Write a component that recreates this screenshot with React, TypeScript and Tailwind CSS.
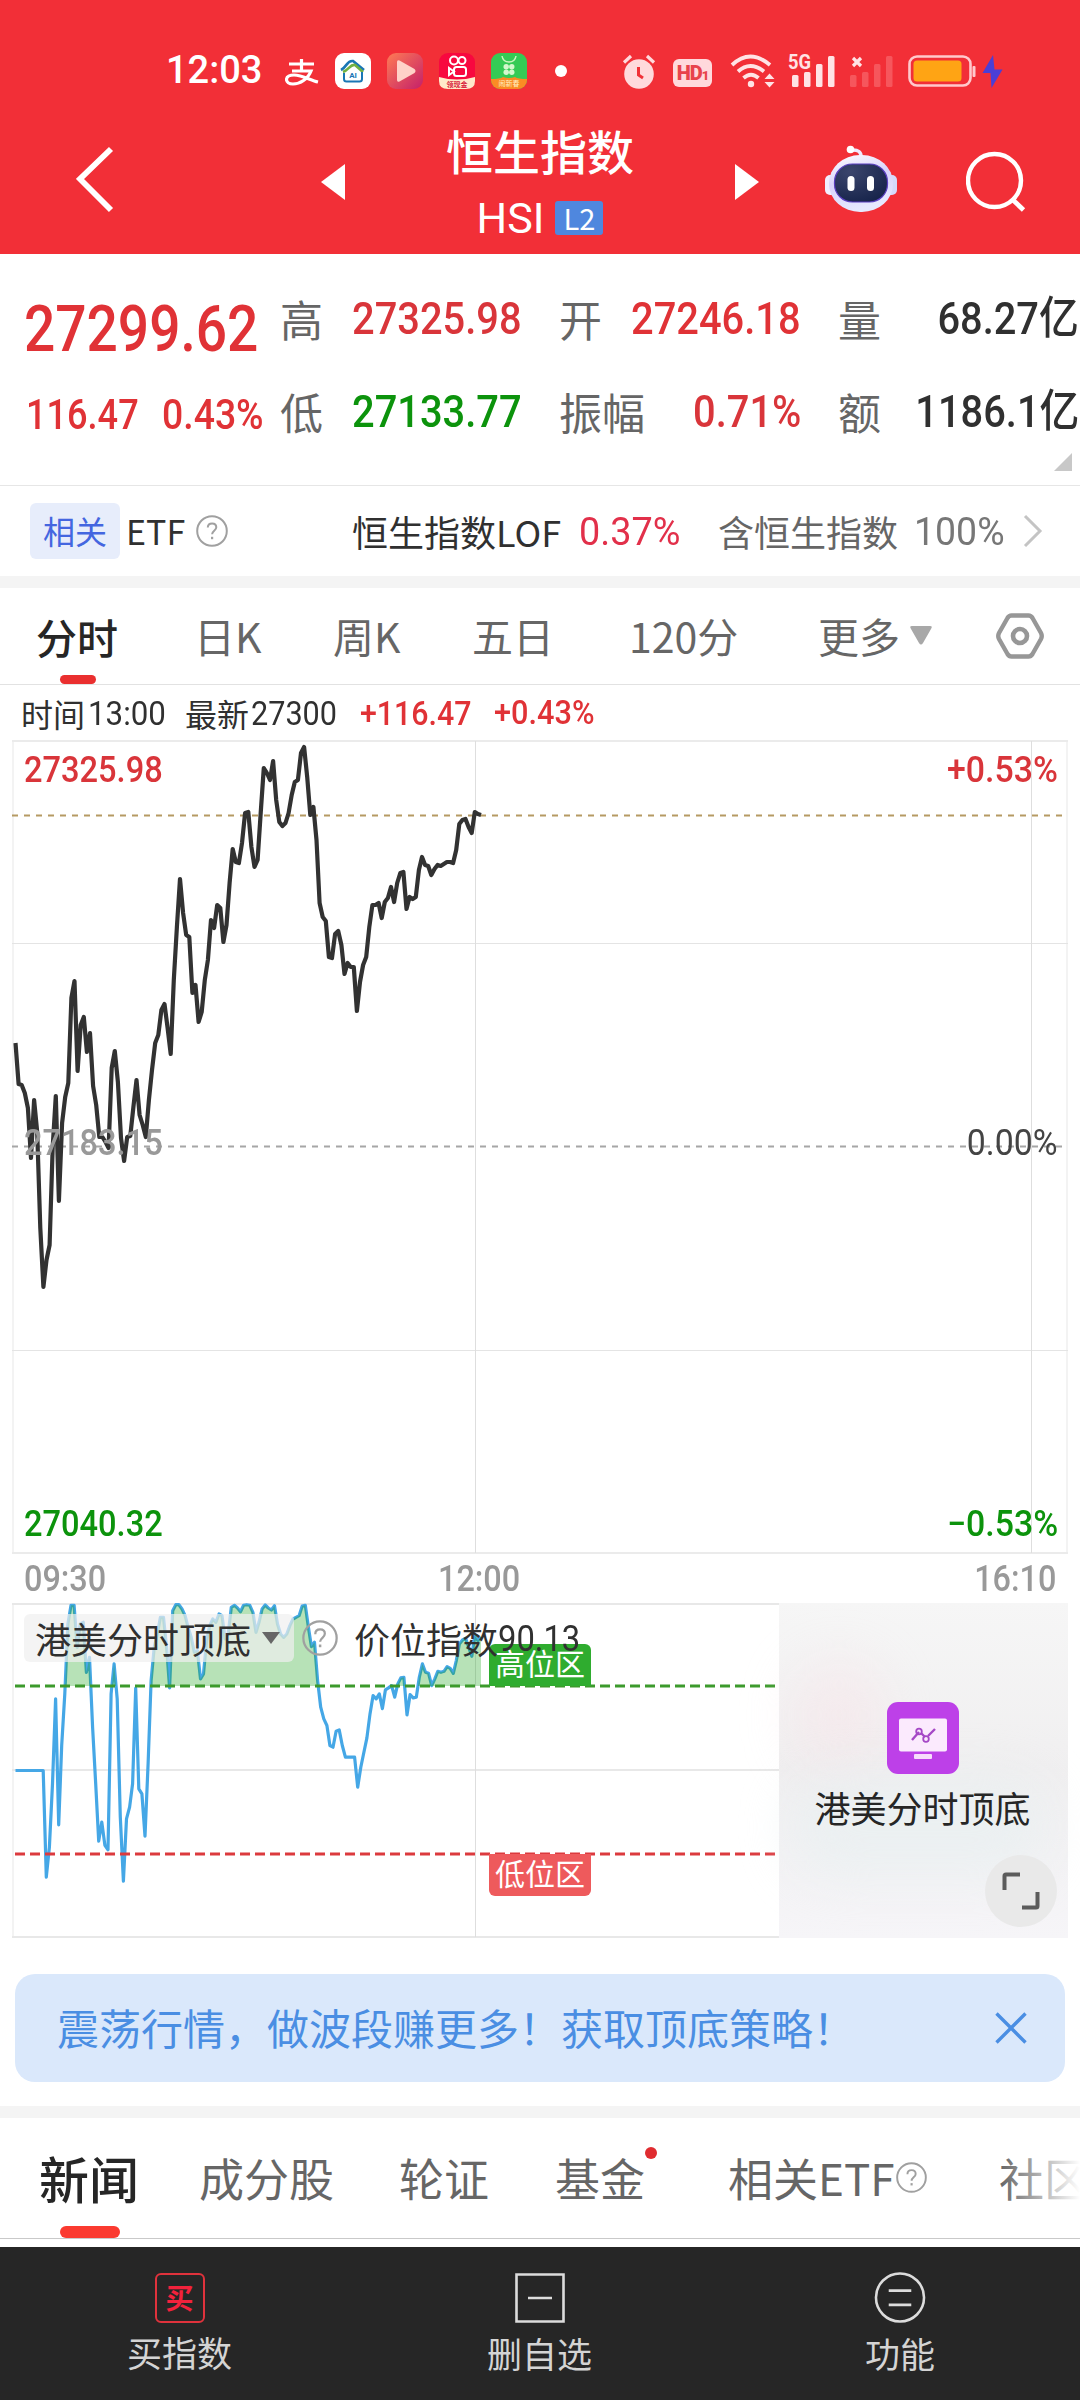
import type { ReactNode } from "react";
import clsx from "clsx";

//=============== DATA ===============//
// Distance in px from the top of the price chart, one value per minute.
const prices = [
  303, 344, 345, 353, 368, 418, 360, 392, 488, 547, 520, 505, 407, 356, 461, 383, 357, 343, 258, 241,
  331, 285, 277, 312, 293, 346, 365, 397, 397, 402, 408, 328, 311, 342, 398, 421, 397, 396, 367, 340,
  375, 385, 397, 360, 330, 303, 295, 270, 264, 288, 314, 240, 187, 139, 173, 195, 197, 253, 245, 282,
  272, 240, 220, 180, 188, 165, 168, 202, 185, 143, 109, 122, 123, 103, 73, 72, 107, 127, 120, 73, 28,
  33, 40, 21, 60, 82, 86, 83, 73, 55, 42, 40, 13, 7, 37, 75, 67, 100, 163, 177, 181, 217, 218, 194,
  191, 205, 234, 223, 227, 227, 271, 242, 225, 217, 187, 165, 165, 163, 178, 162, 158, 147, 162, 143,
  133, 132, 169, 157, 159, 157, 130, 117, 125, 126, 135, 129, 125, 126, 124, 122, 122, 123, 110, 84,
  80, 79, 87, 93, 72, 74, 75,
];

// Position index, 0 - 100, one value per minute.
const positions = [
  50, 50, 50, 50, 50, 50, 50, 50, 50, 50, 18, 27, 46, 71.5, 33.7, 57.5, 73, 94, 99.6, 99.6, 87, 94,
  94.5, 79.5, 84, 63, 46, 28.8, 34.5, 27.5, 26.2, 73, 82, 71.5, 36, 16.8, 35.5, 39, 46, 74.7, 44.5,
  43, 30.3, 52, 77, 87, 91, 96, 96, 87, 74.8, 98, 99.8, 99.8, 98.5, 96.5, 93, 90, 85.5, 86, 77.5, 79,
  89, 93.5, 95.5, 94.5, 97, 96.5, 89.5, 91, 99, 99.6, 98.8, 97.7, 99.6, 99.8, 99.6, 97.5, 91.5, 94.5,
  98.5, 99.7, 98.8, 98.2, 99.5, 94, 91, 90, 91, 93.5, 95.5, 96, 96.5, 99.4, 99.6, 93, 87.2, 88.5, 77,
  69, 65.5, 63.5, 57.5, 57, 61.8, 62.2, 57.5, 54, 54, 54, 54, 45, 51, 55.5, 59.8, 67, 72.5, 71.5, 73,
  68.6, 74.2, 74.8, 75.5, 72, 76, 77.8, 78, 66.7, 72.8, 71.8, 72, 78, 82, 79.5, 79.2, 75.5, 77.5,
  79.8, 79.5, 79.8, 81.2, 80.7, 79.2, 83, 88, 89.2, 89.7, 87, 84.3, 90.5, 89, 90.1,
];

const START_X = 3.5;
const END_X = 469;

const toPoints = (values: number[], toY: (v: number) => number): string => {
  const step = (END_X - START_X) / (values.length - 1);
  return values.map((v, i) => `${(START_X + i * step).toFixed(1)},${toY(v).toFixed(1)}`).join(" ");
};

const pricePoints = toPoints(prices, (v) => v);
const positionPoints = toPoints(positions, (v) => 1 + ((100 - v) / 100) * 333);

//=============== SMALL PARTS ===============//
type PartProps = { className?: string; children?: ReactNode };

// Narrow digits used for every quote value
function Num({ className, children }: PartProps) {
  return (
    <span
      className={clsx(
        "inline-block whitespace-nowrap font-['Roboto','Noto_Sans_CJK_SC',sans-serif] leading-none",
        className,
      )}
    >
      {children}
    </span>
  );
}

function Help({ className }: PartProps) {
  return (
    <svg viewBox="0 0 32 32" className={clsx("shrink-0 fill-none stroke-[#a0a0a0]", className)}>
      <circle cx="16" cy="16" r="14.8" strokeWidth="2" />
      <path d="M11.8 12.6c0-2.6 1.8-4.2 4.3-4.2s4.2 1.6 4.2 3.9c0 3.4-4.2 3.6-4.2 7" strokeWidth="2" />
      <path d="M16.1 21.8v2.4" strokeWidth="2.2" />
    </svg>
  );
}

//=============== STATUS BAR ===============//
function StatusBar() {
  return (
    <div className="flex h-[142px] items-end pb-[53px] pl-[166px] text-white">
      <Num className="w-[119px] text-[38px] font-medium leading-[34px]">12:03</Num>

      {/* Notifications */}
      <svg viewBox="0 0 34 36" className="h-9 w-[34px] fill-none stroke-white">
        <path d="M4 11h25M16.5 6v12M7 18h19c-3 8-11 13-18 13-4 0-6.500-2-6.500-4.500C1.500 23.500 5 22 9 22c8 0 16 5 24 7" strokeWidth="3.200" />
      </svg>
      <svg viewBox="0 0 36 36" className="ml-4 size-9">
        <rect width="36" height="36" rx="9" fill="#fff" />
        <path d="M6 17C12 14 12 7 18 8l11 9" fill="none" stroke="#1976b5" strokeWidth="2.600" />
        <path d="M8 19c6-2 7-8 12-7l8 7" fill="none" stroke="#72b043" strokeWidth="2.600" />
        <path d="M9 20v6q0 2.500 2.500 2.500h13q2.500 0 2.500-2.500v-7" fill="none" stroke="#1976b5" strokeWidth="2" />
        <text x="18" y="25" textAnchor="middle" fontSize="8" className="fill-[#1976b5] font-['Roboto',sans-serif] font-bold">AI</text>
      </svg>
      <svg viewBox="0 0 36 36" className="ml-4 size-9">
        <defs>
          <linearGradient id="play" x1="0" y1="0" x2="1" y2="1">
            <stop offset="0" stopColor="#ff7b54" />
            <stop offset="1" stopColor="#c4206a" />
          </linearGradient>
        </defs>
        <rect width="36" height="36" rx="9" fill="url(#play)" />
        <path d="M10 9v18q0 2.500 2.500 1.500l15-8.500q2-2 0-4l-15-8.500Q10 6.500 10 9z" fill="#ffd2c8" />
      </svg>
      <svg viewBox="0 0 36 36" className="ml-4 size-9">
        <rect width="36" height="36" rx="9" fill="#f8083f" />
        <g fill="none" stroke="#fff" strokeWidth="2">
          <circle cx="15" cy="7.500" r="4" />
          <circle cx="23" cy="7.500" r="3.500" />
          <rect x="15" y="14" width="12" height="9" rx="2.500" />
          <path d="M15 18.500 10 15v7z" />
        </g>
        <path d="M0 24q18 5 36 0v4q0 8-9 8H9q-9 0-9-8z" fill="#ffe9c9" />
        <text x="18" y="33.500" textAnchor="middle" fontSize="7" className="fill-[#d81e3c] font-['Noto_Sans_CJK_SC',sans-serif] font-bold">领现金</text>
      </svg>
      <svg viewBox="0 0 36 36" className="ml-4 size-9">
        <defs>
          <clipPath id="app">
            <rect width="36" height="36" rx="9" />
          </clipPath>
        </defs>
        <g clipPath="url(#app)">
          <rect width="36" height="36" fill="#35cb55" />
          <path d="M11 3q1 6 7 6t7-6" fill="none" stroke="#c9f5bd" strokeWidth="1.500" />
          <g fill="#d4f8cd">
            <circle cx="15.200" cy="13.800" r="2.700" />
            <circle cx="20.800" cy="13.800" r="2.700" />
            <circle cx="15.200" cy="19.300" r="2.700" />
            <circle cx="20.800" cy="19.300" r="2.700" />
          </g>
          <path d="M0 26q9 0 12-2 6 2 12 0 3 2 12 2v10H0z" fill="#fb8b24" />
          <text x="18" y="33" textAnchor="middle" fontSize="7" className="fill-[#fff2c4] font-['Noto_Sans_CJK_SC',sans-serif]">闹新春</text>
        </g>
      </svg>
      <span className="mb-3 ml-[28px] size-3 rounded-full bg-white" />

      {/* System */}
      <svg viewBox="0 0 34 36" className="ml-[55px] h-9 w-[34px]">
        <path d="M2 9.500 9 3M32 9.500 25 3" stroke="#ffd9dc" strokeWidth="3.200" />
        <circle cx="17" cy="21" r="14.800" fill="#ffd9dc" />
        <path d="M16.500 14v8l4.500 3" fill="none" stroke="#f13037" strokeWidth="3" />
      </svg>
      <span className="mb-[2px] ml-[17px] flex h-7 w-[39px] items-center justify-center rounded-md bg-[#ffd9dc] font-['Roboto',sans-serif] text-[20px] font-black tracking-[-1px] text-[#e8434b]">
        HD<span className="pt-1.5 text-[13px]">1</span>
      </span>
      <svg viewBox="0 0 46 36" className="ml-[18px] h-9 w-[46px] fill-none stroke-[#ffe3e5]">
        <path d="M2 12q18-17 38 0M8 18.500q12-11 26 0M13.500 25q7.500-6.500 15 0" strokeWidth="3.800" />
        <circle cx="21" cy="31" r="3.200" className="fill-[#ffe3e5] stroke-none" />
        <path d="m34.500 26 5-5.500 5 5.500zM34.500 29l5 5.500 5-5.500z" className="fill-[#ffe3e5] stroke-none" />
      </svg>
      <svg viewBox="0 0 48 36" className="ml-3 h-9 w-12 overflow-visible fill-[#ffe3e5]">
        <text x="0" y="16" fontSize="20" textLength="23" lengthAdjust="spacingAndGlyphs" className="font-['Roboto',sans-serif] font-bold">5G</text>
        <rect x="4" y="22" width="6.500" height="12" rx="1.500" />
        <rect x="16" y="19" width="6.500" height="15" rx="1.500" />
        <rect x="28" y="11" width="6.500" height="23" rx="1.500" />
        <rect x="40" y="3" width="6.500" height="31" rx="1.500" />
      </svg>
      <svg viewBox="0 0 46 36" className="ml-[14px] h-9 w-[46px] fill-[#f6565c]">
        <path d="m3 5 8 8M11 5l-8 8" stroke="#ffe3e5" strokeWidth="3.200" />
        <rect x="0" y="22" width="6.500" height="12" rx="1.500" />
        <rect x="12" y="19" width="6.500" height="15" rx="1.500" />
        <rect x="24" y="11" width="6.500" height="23" rx="1.500" />
        <rect x="36" y="3" width="6.500" height="31" rx="1.500" />
      </svg>
      <svg viewBox="0 0 96 36" className="ml-[12px] h-9 w-24">
        <rect x="1.500" y="3.500" width="61" height="29" rx="7.500" fill="none" stroke="#ffc9cc" strokeWidth="2.600" />
        <rect x="5.500" y="7.500" width="48" height="21" rx="3.500" fill="#ffa414" />
        <rect x="64.500" y="13" width="3" height="11" rx="1" fill="#ffc9cc" />
        <path d="M85 2 74.500 20h8L83.500 35 94.500 16.500h-8z" fill="#4b3fd6" />
      </svg>
    </div>
  );
}

//=============== HEADER ===============//
function Header() {
  return (
    <header className="h-[254px] bg-[#f22f37]">
      <StatusBar />
      <div className="flex h-[112px] items-start text-white">
        <svg viewBox="0 0 38 68" className="ml-[76px] mt-[3px] h-[68px] w-[38px] fill-none stroke-white">
          <path d="M35 4 4 34l31 31" strokeWidth="5.800" />
        </svg>
        <svg viewBox="0 0 24 36" className="ml-[207px] mt-[22px] h-9 w-6 fill-white">
          <path d="M24 0v36L0 18z" />
        </svg>
        <div className="-mt-[18px] ml-[76px] flex w-[238px] flex-col items-center">
          <h1 className="text-[47px] font-medium leading-[52px]">恒生指数</h1>
          <div className="mt-[24px] flex items-center gap-[11px]">
            <span className="font-['Roboto',sans-serif] text-[43px] leading-[36px]">HSI</span>
            <span className="flex h-[34px] w-12 items-center justify-center rounded-[3px] bg-[#4f87de] pb-0.5 text-[29px] leading-none">
              L2
            </span>
          </div>
        </div>
        <svg viewBox="0 0 24 36" className="ml-[76px] mt-[22px] h-9 w-6 fill-white">
          <path d="M0 0v36l24-18z" />
        </svg>

        {/* Assistant */}
        <svg viewBox="0 0 72 68" className="ml-[66px] mt-[3px] h-[68px] w-[72px]">
          <defs>
            <linearGradient id="shell" x1="0" y1="0" x2="0.300" y2="1">
              <stop offset="0" stopColor="#fff" />
              <stop offset="0.500" stopColor="#d9d3fb" />
              <stop offset="1" stopColor="#e6e9ff" />
            </linearGradient>
            <radialGradient id="visor" cx="0.300" cy="0.200" r="0.900">
              <stop offset="0" stopColor="#3b456c" />
              <stop offset="1" stopColor="#16234a" />
            </radialGradient>
          </defs>
          <path d="M26 5q11-1 10 8" fill="none" stroke="#efeaff" strokeWidth="3.500" />
          <circle cx="25.500" cy="4.500" r="3.800" fill="#fff" />
          <rect x="0" y="30" width="12" height="20" rx="5" fill="#f1efff" />
          <rect x="60" y="30" width="12" height="20" rx="5" fill="#d5dafb" />
          <rect x="4" y="10" width="64" height="57" rx="31" ry="28" fill="url(#shell)" />
          <rect x="9.500" y="19" width="53" height="38" rx="18" fill="url(#visor)" stroke="#5a3fc0" strokeWidth="1.200" />
          <rect x="22.500" y="31" width="7" height="15" rx="3.500" fill="#fff" />
          <rect x="42" y="31" width="7" height="15" rx="3.500" fill="#fff" />
        </svg>
        <svg viewBox="0 0 60 62" className="ml-[69px] mt-[9px] h-[62px] w-[60px] fill-none stroke-white">
          <circle cx="28.500" cy="29.500" r="26.500" strokeWidth="4.400" />
          <path d="m47 49 10.500 10" strokeWidth="4.800" />
        </svg>
      </div>
    </header>
  );
}

//=============== QUOTE ===============//
const stats = [
  { label: "高", value: "27325.98", color: "text-[#d9353a]" },
  { label: "开", value: "27246.18", color: "text-[#e03236]" },
  { label: "量", value: "68.27亿", color: "text-[#303030]" },
  { label: "低", value: "27133.77", color: "text-[#0c930c]" },
  { label: "振幅", value: "0.71%", color: "text-[#d9353a]" },
  { label: "额", value: "1186.1亿", color: "text-[#303030]" },
];

function Quote() {
  return (
    <section className="relative flex h-[231px] w-[1080px]">
      <div className="w-[280px] shrink-0 pl-[24px] pt-[44px] text-[#e03236]">
        <Num className="origin-left scale-x-[.86] text-[64px] font-medium leading-[64px]">27299.62</Num>
        <div className="flex pt-[32px]">
          <div className="w-[138px] pl-0.5">
            <Num className="origin-left scale-x-[.86] text-[42px] font-medium leading-[46px]">116.47</Num>
          </div>
          <Num className="origin-left scale-x-[.89] text-[42px] font-medium leading-[46px]">0.43%</Num>
        </div>
      </div>
      <div className="grid shrink-0 grid-cols-[242px_279px_278px] grid-rows-[93px_93px] pt-[18px]">
        {stats.map((s, i) => (
          <div key={s.label} className={clsx("flex items-center justify-between", i % 3 && "pl-[37px]")}>
            <span className="text-[43px] leading-none text-[#666]">{s.label}</span>
            <Num className={clsx("origin-right scale-x-[.885] text-[45px] font-medium", s.color)}>{s.value}</Num>
          </div>
        ))}
      </div>
      <svg viewBox="0 0 18 18" className="absolute bottom-[14px] right-2 size-[18px] fill-[#c8c8c8]">
        <path d="M18 0v18H0z" />
      </svg>
    </section>
  );
}

function RelatedEtf() {
  return (
    <section className="flex h-[103px] items-center border-t border-[#e6e6e6] border-b-[12px] border-b-[#f4f4f4] text-[36px] leading-none">
      <span className="ml-[30px] flex h-14 w-[90px] items-center justify-center rounded-md bg-[#e7edfb] pb-0.5 text-[32px] text-[#4466e0]">
        相关
      </span>
      <span className="ml-[6px] w-[61px] text-[34px] text-[#303030]">ETF</span>
      <Help className="ml-[9px] size-[32px]" />
      <span className="ml-[124px] w-[227px] whitespace-nowrap text-[#303030]">恒生指数LOF</span>
      <div className="w-[139px]">
        <Num className="-mt-1 origin-left scale-x-[.97] text-[39px] text-[#e2304a]">0.37%</Num>
      </div>
      <span className="w-[196px] whitespace-nowrap text-[#666]">含恒生指数</span>
      <div className="w-[109px]">
        <Num className="-mt-1 origin-left scale-x-[.96] text-[39px] text-[#777]">100%</Num>
      </div>
      <svg viewBox="0 0 20 34" className="h-[34px] w-5 fill-none stroke-[#c4c4c4]">
        <path d="m2 2 15 15L2 32" strokeWidth="3" />
      </svg>
    </section>
  );
}

//=============== PERIOD TABS ===============//
function PeriodTabs() {
  return (
    <nav className="grid h-[97px] grid-cols-[158px_139px_138px_158px_187px_179px_60px] items-center border-b border-[#e2e2e2] pl-[36px] text-[41px] leading-none text-[#666]">
      <div className="relative flex h-full items-center font-medium text-[#262626]">
        分时
        <span className="absolute bottom-0 left-6 h-[9px] w-9 rounded-full bg-[#ea2f2f]" />
      </div>
      <span className="-mt-0.5 whitespace-nowrap">日K</span>
      <span className="-mt-0.5 whitespace-nowrap">周K</span>
      <span className="-mt-0.5 pl-px">五日</span>
      <span className="-mt-0.5 whitespace-nowrap">120分</span>
      <div className="-mt-0.5 flex items-center gap-[10px] pl-0.5">
        更多
        <svg viewBox="0 0 22 19" className="h-[19px] w-[22px] fill-[#a8a8a8]">
          <path d="M2 0h18q3 0 1 3l-8 14q-2 3-4 0L1 3q-2-3 1-3z" />
        </svg>
      </div>
      <svg viewBox="0 0 48 46" className="ml-px h-[46px] w-12 fill-none stroke-[#979797]">
        <path d="M15.500 2.500h17q2.500 0 4 2.500l8.500 15q1.500 3 0 6l-8.500 15q-1.500 2.500-4 2.500h-17q-2.500 0-4-2.500L3 26q-1.500-3 0-6l8.500-15q1.500-2.500 4-2.500z" strokeWidth="4.400" />
        <circle cx="24" cy="23" r="7" strokeWidth="4.600" />
      </svg>
    </nav>
  );
}

//=============== PRICE CHART ===============//
function PriceChart() {
  return (
    <section>
      <div className="flex h-[55px] items-center pl-[21px] text-[32px] leading-none text-[#303030]">
        <span>时间</span>
        <div className="w-[100px] pl-[3px]">
          <Num className="origin-left scale-x-[.92] text-[34px]">13:00</Num>
        </div>
        <span>最新</span>
        <div className="w-[111px] pl-0.5">
          <Num className="origin-left scale-x-[.9] text-[34px]">27300</Num>
        </div>
        <div className="w-[134px] text-[#e03236]">
          <Num className="origin-left scale-x-[.92] text-[33px] font-medium">+116.47</Num>
        </div>
        <Num className="origin-left scale-x-[.93] text-[33px] font-medium text-[#e03236]">+0.43%</Num>
      </div>

      <div className="relative ml-3 h-[814px] w-[1056px]">
        <svg viewBox="0 0 1056 814" className="h-full w-full fill-none">
          <path d="M1 1v812M1055 1v812" stroke="#f3f3f3" strokeWidth="2" />
          <path d="M0 1h1056M0 813h1056" stroke="#ebebeb" strokeWidth="2" />
          <path d="M0 203.500h1056M0 610.500h1056" stroke="#e4e4e4" />
          <path d="M463.500 1v812M1019.500 1v812" stroke="#dedede" />
          <path d="M0 75.500h1056" stroke="#b59a63" strokeWidth="1.800" strokeDasharray="6 6" />
          <path d="M0 406.500h1056" stroke="#a6a6a6" strokeWidth="1.800" strokeDasharray="6 6" />
          <polyline points={pricePoints} stroke="#323232" strokeWidth="4.200" strokeLinejoin="round" />
        </svg>
        <Num className="absolute left-3 top-[12px] origin-left scale-x-[.905] text-[36px] font-medium text-[#d9353a]">27325.98</Num>
        <Num className="absolute right-2.5 top-[12px] origin-right scale-x-[.94] text-[36px] font-medium text-[#d9353a]">+0.53%</Num>
        <Num className="absolute left-3 top-[385px] origin-left scale-x-[.905] text-[36px] font-medium text-[#999]">27183.15</Num>
        <Num className="absolute right-2.5 top-[385px] origin-right scale-x-[.94] text-[36px] text-[#444]">0.00%</Num>
        <Num className="absolute bottom-[12px] left-3 origin-left scale-x-[.905] text-[36px] font-medium text-[#0c930c]">27040.32</Num>
        <Num className="absolute bottom-[12px] right-2.5 origin-right scale-x-[.94] text-[36px] font-medium text-[#0c930c]">−0.53%</Num>
      </div>

      <div className="flex h-[49px] items-center pl-[24px] pr-[24px] text-[#999]">
        <div className="w-[414px]">
          <Num className="origin-left scale-x-[.9] text-[36px] font-medium">09:30</Num>
        </div>
        <Num className="origin-left scale-x-[.9] text-[36px] font-medium">12:00</Num>
        <Num className="ml-auto origin-right scale-x-[.9] text-[36px] font-medium">16:10</Num>
      </div>
    </section>
  );
}

//=============== INDICATOR CHART ===============//
function IndicatorChart() {
  return (
    <section className="mx-3 flex h-[335px]">
      <div className="relative w-[767px]">
        <svg viewBox="0 0 767 335" className="h-full w-full fill-none">
          <defs>
            <clipPath id="high">
              <rect x="0" y="0" width="767" height="83" />
            </clipPath>
          </defs>
          <path d="M1 1v333" stroke="#f3f3f3" strokeWidth="2" />
          <path d="M0 1h767M0 334h767M0 167h767" stroke="#e8e8e8" strokeWidth="2" />
          <path d="M463.500 1v333" stroke="#dedede" />
          <polyline points={positionPoints} stroke="#45a7e6" strokeWidth="3.200" strokeLinejoin="round" />
          <polygon
            points={`${START_X},334 ${positionPoints} ${END_X},334`}
            className="fill-[#12a012]/30"
            clipPath="url(#high)"
          />
          <path d="M3 83h761" stroke="#3c9a2c" strokeWidth="3" strokeDasharray="10 5" />
          <path d="M3 251h761" stroke="#dc3a3e" strokeWidth="3" strokeDasharray="10 5" />
        </svg>
        <span className="absolute left-[477px] top-[41px] flex h-[42px] w-[102px] items-center justify-center rounded-t-md bg-[#2fac2f] pb-1.5 text-[30px] leading-none text-white">
          高位区
        </span>
        <span className="absolute left-[477px] top-[251px] flex h-[42px] w-[102px] items-center justify-center rounded-b-md bg-[#ee5a5c] pb-1.5 text-[30px] leading-none text-white">
          低位区
        </span>
        <div className="absolute left-3 top-[11px] flex h-12 items-center whitespace-nowrap text-[36px] leading-none text-[#303030]">
          <div className="flex h-full w-[270px] items-center rounded-md bg-[#efefef]/70 pl-[11px]">
            <span>港美分时顶底</span>
            <svg viewBox="0 0 18 12" className="ml-[11px] h-3 w-[18px] fill-[#666]">
              <path d="M0 0h18l-9 12z" />
            </svg>
          </div>
          <Help className="ml-[8px] size-[36px]" />
          <span className="ml-[16px]">价位指数</span>
          <Num className="mt-0.5 origin-left scale-x-[.91] text-[36px]">90.13</Num>
        </div>
      </div>

      {/* Locked panel */}
      <div className="relative flex w-[289px] flex-col items-center bg-linear-to-b from-[#f6f6f6] via-[#f0eff0] via-50% to-[#f6f5f8] pt-[99px]">
        <div className="absolute left-3 top-14 h-28 w-24 rounded-full bg-[#f9dfe4]/35 blur-xl" />
        <div className="absolute left-3 top-44 h-24 w-64 rounded-full bg-[#e8f0f1]/70 blur-xl" />
        <svg viewBox="0 0 72 72" className="relative -ml-0.5 size-[72px] fill-none">
          <rect width="72" height="72" rx="11" fill="#bd40e8" />
          <rect x="12" y="16.500" width="48" height="33" rx="2" fill="#fbeafd" />
          <path d="m25 38 7-8M34 31l4 4M41 34l7-7" stroke="#a548c6" strokeWidth="2.400" />
          <circle cx="32" cy="29.500" r="2.800" stroke="#a548c6" strokeWidth="1.800" />
          <circle cx="39" cy="37" r="2.800" stroke="#a548c6" strokeWidth="1.800" />
          <rect x="27" y="52" width="18" height="5" rx="1" fill="#f7dcfb" />
        </svg>
        <span className="relative -ml-0.5 mt-[15px] text-[36px] leading-none text-[#262626]">港美分时顶底</span>
        <span className="absolute bottom-[11px] right-[11px] flex size-[72px] items-center justify-center rounded-full bg-[#e9e9e9]">
          <svg viewBox="0 0 38 38" className="size-[38px] fill-none stroke-[#5c5c5c]">
            <path d="M2.500 18V4q0-1.500 1.500-1.500h14M35.500 20v14q0 1.500-1.500 1.500H20" strokeWidth="4" />
          </svg>
        </span>
      </div>
    </section>
  );
}

function Banner() {
  return (
    <div className="mx-[15px] mt-[36px] flex h-[108px] items-center justify-between rounded-[20px] bg-[#dae8fb] pl-[42px] pr-[38px] text-[#4a8ee3]">
      <span className="-mt-0.5 whitespace-nowrap text-[42px] leading-none">震荡行情，做波段赚更多！获取顶底策略！</span>
      <svg viewBox="0 0 32 32" className="size-8 fill-none stroke-[#4a8ee3]">
        <path d="m1.500 1.500 29 29M30.500 1.500l-29 29" strokeWidth="3.400" />
      </svg>
    </div>
  );
}

//=============== NEWS TABS ===============//
function NewsTabs() {
  return (
    <nav className="relative mt-6 h-[141px] overflow-hidden border-t-[12px] border-[#f4f4f4]">
      <div className="grid h-[121px] grid-cols-[160px_200px_156px_173px_271px_81px] items-center border-b border-[#c9c9c9] pl-[39px] text-[45px] leading-none text-[#666]">
        <div className="relative flex h-full items-center text-[50px] font-medium text-[#262626]">
          <span className="-mt-0.5">新闻</span>
          <span className="absolute bottom-0 left-[21px] h-3 w-[60px] rounded-full bg-[#fb3a30]" />
        </div>
        <span className="-mt-0.5">成分股</span>
        <span className="-mt-0.5">轮证</span>
        <div className="relative -mt-0.5">
          基金
          <span className="absolute -top-2 left-[90px] size-3 rounded-full bg-[#e02c30]" />
        </div>
        <div className="-mt-0.5 flex items-center whitespace-nowrap">
          相关<span className="w-[78px] text-[44px]">ETF</span>
          <Help className="size-[31px]" />
        </div>
        <span className="-mt-0.5 whitespace-nowrap">社区</span>
      </div>
      <div className="absolute right-0 top-5 h-24 w-20 bg-linear-to-l from-white to-transparent" />
    </nav>
  );
}

//=============== BOTTOM BAR ===============//
function BottomBar() {
  return (
    <footer className="grid h-[153px] grid-cols-3 bg-[#262626] pt-[26px] text-[35px] leading-none text-[#d4d4d4]">
      <div className="flex flex-col items-center gap-[11px] pr-px">
        <span className="flex size-[50px] items-center justify-center rounded-md border-[2.5px] border-[#e0323c] text-[28px] font-bold text-[#f2223c]">
          <span className="-mt-0.5">买</span>
        </span>
        买指数
      </div>
      <div className="flex flex-col items-center gap-[12px] pr-px">
        <svg viewBox="0 0 50 50" className="size-[50px] fill-none stroke-[#dcdcdc]">
          <path d="M1.500 1.500h47v47h-47zM13 25h24" strokeWidth="2.600" />
        </svg>
        删自选
      </div>
      <div className="flex flex-col items-center gap-[12px]">
        <svg viewBox="0 0 52 52" className="-mt-px h-[51px] w-[52px] fill-none stroke-[#dcdcdc]">
          <circle cx="26" cy="26" r="24.500" strokeWidth="2.600" />
          <path d="M14.500 19h23M14.500 33.500h23" strokeWidth="2.800" />
        </svg>
        功能
      </div>
    </footer>
  );
}

//=============== PAGE ===============//
export default function App() {
  return (
    <main className="flex h-[2400px] w-[1080px] flex-col overflow-hidden bg-white font-['Noto_Sans_CJK_SC',sans-serif]">
      <Header />
      <Quote />
      <RelatedEtf />
      <PeriodTabs />
      <PriceChart />
      <IndicatorChart />
      <Banner />
      <NewsTabs />
      <BottomBar />
    </main>
  );
}
